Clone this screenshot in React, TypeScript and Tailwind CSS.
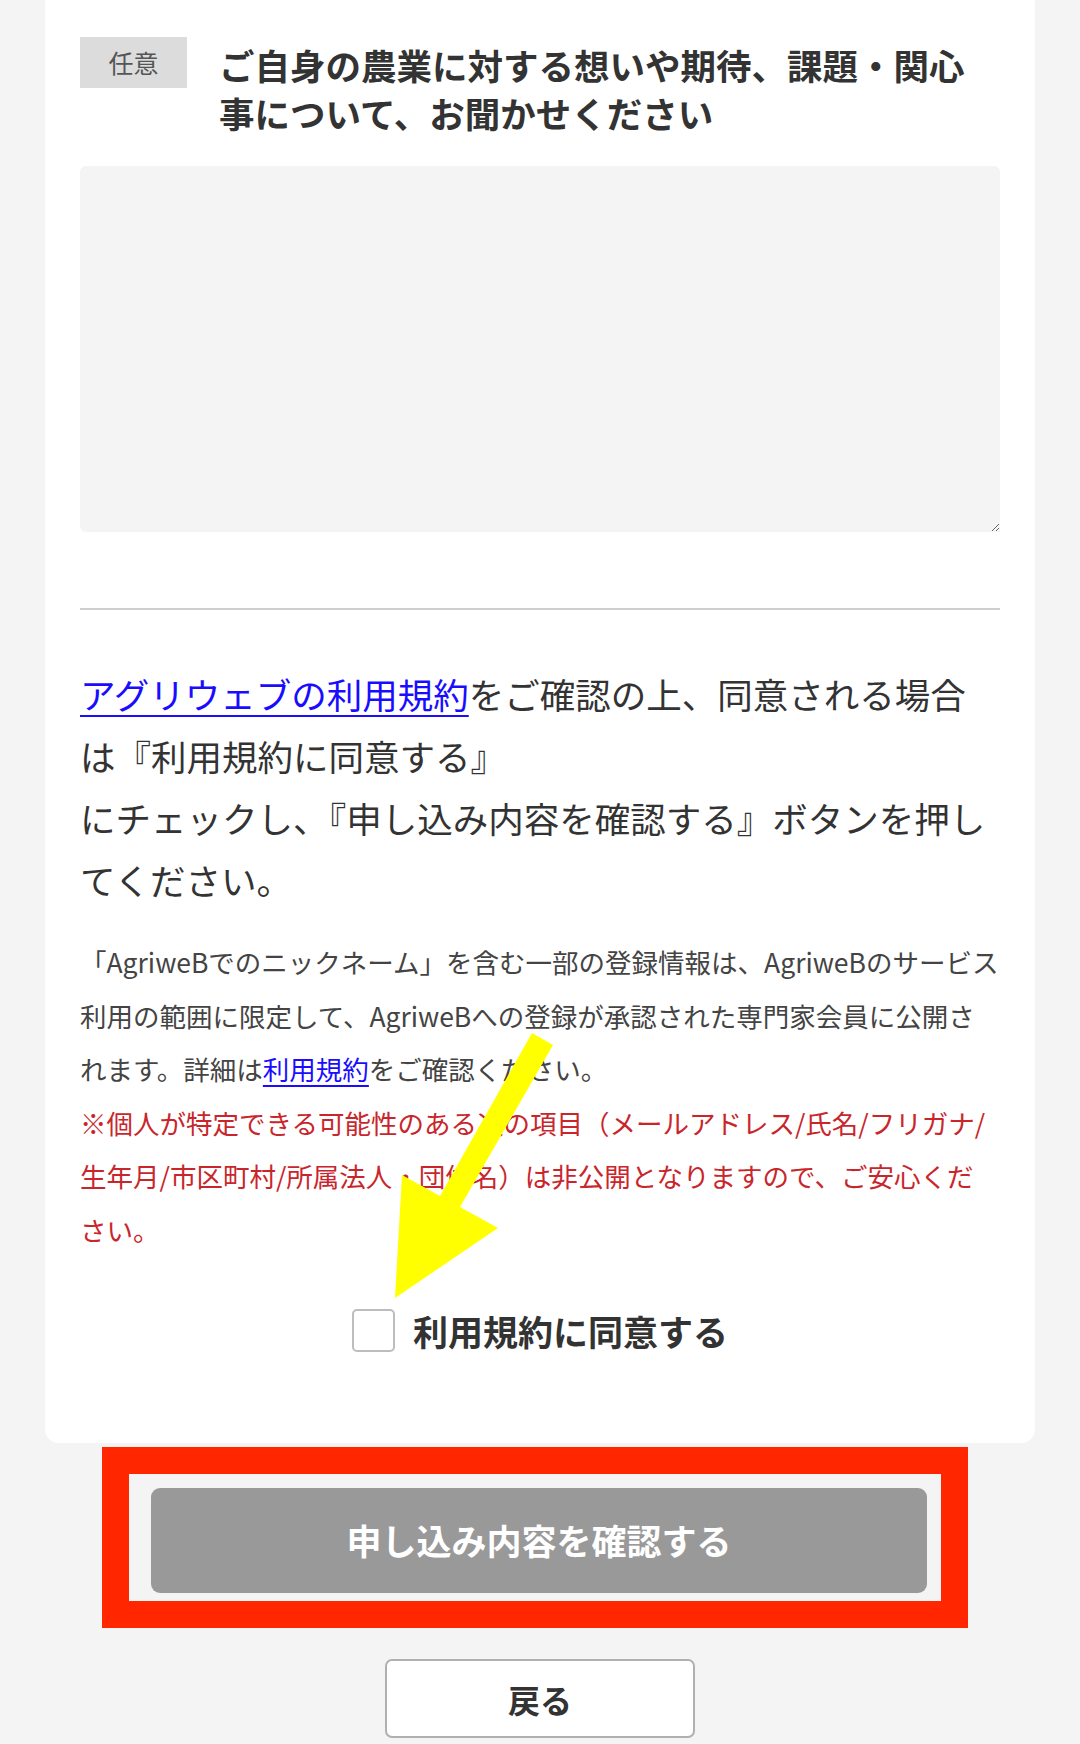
import React from "react"

const jp = { fontFamily: '"Noto Sans CJK JP", "Noto Sans", sans-serif' }

function Arrow() {
  // yellow annotation arrow drawn over the form
  return (
    <svg className="pointer-events-none absolute left-0 top-0" width="1080" height="1744" viewBox="0 0 1080 1744">
      <polygon
        points="532,1033 553,1045 460,1207 498,1228 395,1298 402,1175 440,1196"
        fill="#ffff00"
      />
    </svg>
  )
}

export default function App() {
  return (
    <div className="relative min-h-[1744px] w-[1080px] bg-[#f4f4f4] pb-[7px]" style={jp}>
      <div className="mx-[45px] rounded-b-[14px] bg-white px-[35px] pb-[91px] pt-[37px]">
        <div className="flex items-start">
          <div className="flex h-[51px] w-[107px] shrink-0 items-center justify-center bg-[#dcdcdc] text-[25px] text-[#555]">
            任意
          </div>
          <h2 className="ml-[32px] mt-[4px] text-[35.5px] font-bold leading-[48px] text-[#333]">
            ご自身の農業に対する想いや期待、課題・関心
            <br />
            事について、お聞かせください
          </h2>
        </div>

        <textarea className="mt-[29px] block h-[366px] w-full resize-y rounded-t-[6px] rounded-bl-[6px] bg-[#f4f4f4] outline-none" />

        <div className="mt-[76px] h-[2px] bg-[#cfcfcf]" />

        <p className="mt-[53px] whitespace-nowrap text-[35.5px] leading-[62px] text-[#333]">
          <a href="#" className="text-[#1a0dff] underline decoration-2 underline-offset-[6px]">
            アグリウェブの利用規約
          </a>
          をご確認の上、同意される場合
          <br />
          は『利用規約に同意する』
          <br />
          にチェックし、『申し込み内容を確認する』ボタンを押し
          <br />
          てください。
        </p>

        <p className="mt-[24px] whitespace-nowrap text-[26.5px] leading-[53.5px] text-[#444]">
          「AgriweBでのニックネーム」を含む一部の登録情報は、AgriweBのサービス
          <br />
          利用の範囲に限定して、AgriweBへの登録が承認された専門家会員に公開さ
          <br />
          れます。詳細は
          <a href="#" className="text-[#1a0dff] underline underline-offset-[5px]">
            利用規約
          </a>
          をご確認ください。
        </p>
        <p className="whitespace-nowrap text-[26.5px] leading-[53.5px] text-[#c9262c]">
          ※個人が特定できる可能性のある次の項目（メールアドレス/氏名/フリガナ/
          <br />
          生年月/市区町村/所属法人・団体名）は非公開となりますので、ご安心くだ
          <br />
          さい。
        </p>

        <label className="mt-[53px] flex items-center justify-center gap-[18px]">
          <span className="h-[43px] w-[43px] rounded-[5px] border-2 border-[#bdbdbd] bg-white" />
          <span className="text-[35px] font-bold leading-[43px] text-[#333]">利用規約に同意する</span>
        </label>
      </div>

      <div className="mx-auto mt-[4px] w-[866px] -translate-x-[5px] border-[27px] border-[#ff2600] pb-[8px] pl-[22px] pr-[14px] pt-[14px]">
        <button className="flex h-[105px] w-full items-center justify-center rounded-[9px] bg-[#999] text-[35px] font-bold text-white">
          申し込み内容を確認する
        </button>
      </div>

      <div className="mt-[31px] flex justify-center">
        <button className="h-[79px] w-[310px] rounded-[7px] border-2 border-[#b0b0b0] bg-white text-[32px] font-bold text-[#333]">
          戻る
        </button>
      </div>

      <Arrow />
    </div>
  )
}
